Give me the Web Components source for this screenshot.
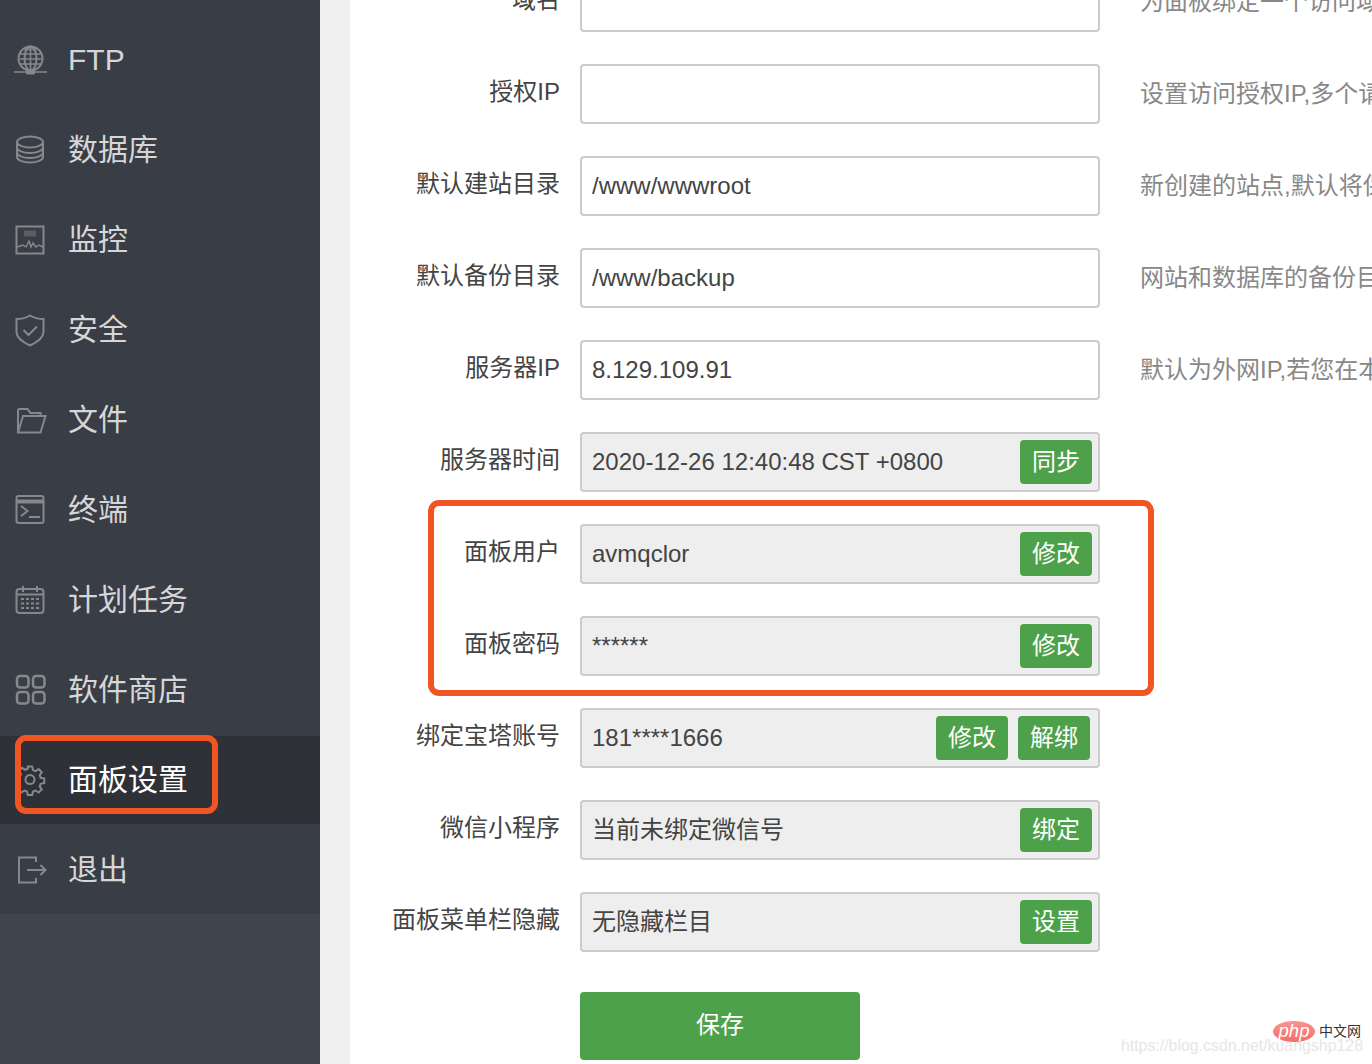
<!DOCTYPE html>
<html lang="zh-CN"><head><meta charset="utf-8"><title>面板设置</title>
<style>
html,body{margin:0;padding:0;height:1064px;overflow:hidden;background:#fff;font-family:"Liberation Sans","Noto Sans CJK SC",sans-serif;}
</style></head><body>
<bt-app>
  <bt-sidebar slot="side">
    <bt-nav icon="ftp" label="FTP"></bt-nav>
    <bt-nav icon="db" label="数据库"></bt-nav>
    <bt-nav icon="mon" label="监控"></bt-nav>
    <bt-nav icon="shield" label="安全"></bt-nav>
    <bt-nav icon="folder" label="文件"></bt-nav>
    <bt-nav icon="term" label="终端"></bt-nav>
    <bt-nav icon="cal" label="计划任务"></bt-nav>
    <bt-nav icon="apps" label="软件商店"></bt-nav>
    <bt-nav icon="gear" label="面板设置" active></bt-nav>
    <bt-nav icon="exit" label="退出"></bt-nav>
  </bt-sidebar>
  <bt-form>
    <bt-row label="域名" note="为面板绑定一个访问域名"></bt-row>
    <bt-row label="授权IP" note="设置访问授权IP,多个请使用逗号隔开"></bt-row>
    <bt-row label="默认建站目录" value="/www/wwwroot" note="新创建的站点,默认将保存到该目录"></bt-row>
    <bt-row label="默认备份目录" value="/www/backup" note="网站和数据库的备份目录"></bt-row>
    <bt-row label="服务器IP" value="8.129.109.91" note="默认为外网IP,若您在本地虚拟机安装"></bt-row>
    <bt-row label="服务器时间" value="2020-12-26 12:40:48 CST +0800" readonly><bt-btn>同步</bt-btn></bt-row>
    <bt-row label="面板用户" value="avmqclor" readonly><bt-btn>修改</bt-btn></bt-row>
    <bt-row label="面板密码" value="******" readonly><bt-btn>修改</bt-btn></bt-row>
    <bt-row label="绑定宝塔账号" value="181****1666" readonly wide><bt-btn>修改</bt-btn><bt-btn>解绑</bt-btn></bt-row>
    <bt-row label="微信小程序" value="当前未绑定微信号" readonly><bt-btn>绑定</bt-btn></bt-row>
    <bt-row label="面板菜单栏隐藏" value="无隐藏栏目" readonly><bt-btn>设置</bt-btn></bt-row>
    <bt-save>保存</bt-save>
  </bt-form>
  <bt-mark style="left:15px;top:735px;width:203px;height:79px"></bt-mark>
  <bt-mark style="left:428px;top:500px;width:726px;height:196px"></bt-mark>
  <bt-watermark></bt-watermark>
</bt-app>
<script>
const ICONS={
ftp:'<circle cx="15.500" cy="14.500" r="12"/><ellipse cx="15.500" cy="14.500" rx="6" ry="12"/><path d="M4.500 10h22M4.500 15h22M4.500 20h22M15.500 2.500v24M-1 28h33" stroke-width="1.600"/><rect x="11" y="25.500" width="9" height="5" rx="1.500" fill="currentColor" stroke="none"/><path d="M9 5h13" stroke-width="3.500" opacity=".6"/>',
db:'<ellipse cx="15" cy="8" rx="13" ry="5.500"/><path d="M2 8v15c0 3 5.800 5.500 13 5.500s13-2.500 13-5.500V8M2 13.500c0 3 5.800 5.500 13 5.500s13-2.500 13-5.500M2 18.500c0 3 5.800 5.500 13 5.500s13-2.500 13-5.500"/>',
mon:'<rect x="1.500" y="2.500" width="27" height="27"/><rect x="9" y="6.500" width="12" height="6" fill="currentColor" stroke="none" opacity=".45"/><path d="M2 23l6-2 3 2 3-6 2 6 2-4 3 4 3-2 4 2" stroke-width="1.500"/>',
shield:'<path d="M15 1.500c4 2.500 8 3.500 13.500 3.500v13c0 6-6 10-13.500 13.500C7.500 28 1.500 24 1.500 18V5C7 5 11 4 15 1.500z"/><path d="M8.500 16l5 5 8.500-8.500"/>',
folder:'<path d="M3 28V6.500A1.500 1.500 0 0 1 4.500 5h8l3 4h10v3"/><path d="M3 28.500h22.500L30.500 12H8L3 28.500z"/>',
term:'<rect x="1.500" y="2" width="27" height="27" rx="2"/><path d="M2 7.500h26" stroke-width="4"/><path d="M6 12l6.500 5L6 22M14 23h11"/>',
cal:'<rect x="1.500" y="5" width="27" height="24" rx="3"/><path d="M8 2v6M22 2v6M2 10.500h26"/><path d="M6 15h18M6 19.500h18M6 24h18" stroke-dasharray="3 2" stroke-width="1.800"/>',
apps:'<rect x="2" y="2" width="11.500" height="11.500" rx="3" stroke-width="2.500"/><rect x="18" y="2" width="11.500" height="11.500" rx="3" stroke-width="2.500"/><rect x="2" y="18" width="11.500" height="11.500" rx="3" stroke-width="2.500"/><rect x="18" y="18" width="11.500" height="11.500" rx="3" stroke-width="2.500"/>',
gear:'<circle cx="15" cy="15.500" r="4.500"/><path d="M12.800 2.500h4.400l.8 3.600 2.500 1 3.100-2 3.100 3.100-2 3.100 1 2.500 3.600.8v4.400l-3.600.8-1 2.500 2 3.100-3.100 3.100-3.100-2-2.500 1-.8 3.600h-4.400l-.8-3.600-2.500-1-3.100 2-3.100-3.100 2-3.100-1-2.500L1.400 17.700v-4.400L5 12.500l1-2.500-2-3.100 3.100-3.100 3.100 2 2.500-1z"/>',
exit:'<path d="M21 8V3.500H4v25h17V24"/><path d="M12 16h18M25.500 11l5 5-5 5"/>'
};
const def=(n,html)=>{customElements.define(n,class extends HTMLElement{
  connectedCallback(){ if(this.shadowRoot) return; const s=this.attachShadow({mode:'open'}); s.innerHTML=typeof html==='function'?html(this):html; }
});};
def('bt-app',`<style>
:host{display:grid;grid-template-columns:320px 30px 1fr;height:1064px;position:relative;overflow:hidden}
.gut{background:#f0f0f0}
</style><slot name="side"></slot><div class="gut"></div><slot></slot>`);
def('bt-sidebar',`<style>
:host{display:block;height:1064px;box-sizing:border-box;background:#3e454d}
.top{padding-top:14px;background:#393d45;}
</style><div class="top"><slot></slot></div>`);
def('bt-nav',h=>`<style>
:host{display:flex;align-items:center;height:90px;box-sizing:border-box;padding-left:15px;color:#d5d6d8;font-size:30px}
:host([active]){color:#fff;background:#2e3138;background-clip:padding-box;border-top:2px solid transparent}
svg{width:31px;height:31px;flex:none;fill:none;stroke:#85888c;stroke-width:2;margin-right:22px;color:#85888c;overflow:visible;filter:blur(.35px)}
:host([active]) svg{position:relative;top:-1px}
span{line-height:40px;position:relative;top:1px}
:host([active]) span{top:0}
</style><svg viewBox="0 0 31 31">${ICONS[h.getAttribute('icon')]}</svg><span>${h.getAttribute('label')}</span>`);
def('bt-form',`<style>
:host{display:block;margin-top:-28px;color:#555}
</style><slot></slot>`);
def('bt-row',h=>{const note=h.getAttribute('note');const v=h.getAttribute('value')||'';const ro=h.hasAttribute('readonly');
return `<style>
:host{display:grid;grid-template-columns:210px 520px 1fr;column-gap:20px;height:60px;margin-bottom:32px;align-items:center;overflow:hidden}
:host([wide]) .btns{right:8px}
.l{text-align:right;font-size:24px;line-height:32px;color:#444;position:relative;top:-2px;white-space:nowrap}
.box{position:relative;box-sizing:border-box;height:60px;border:2px solid #ccc;border-radius:4px;background:${ro?'#eee':'#fff'};padding:0 10px;font-size:24px;line-height:56px;color:#444;white-space:nowrap}
.btns{position:absolute;right:6px;top:6px;display:flex;gap:10px}
.n{font-size:24px;color:#888;white-space:nowrap;line-height:32px;margin-left:20px;overflow:hidden}
</style><div class="l">${h.getAttribute('label')}</div><div class="box">${v}<div class="btns"><slot></slot></div></div>${note?`<div class="n">${note}</div>`:''}`});
def('bt-btn',`<style>
:host{display:block;width:72px;height:44px;background:#4ea14b;border-radius:4px;color:#fff;font-size:24px;line-height:44px;text-align:center}
</style><slot></slot>`);
def('bt-save',`<style>
:host{display:block;width:280px;height:68px;margin:40px 0 0 230px;background:#4ea14b;border-radius:4px;color:#fff;font-size:24px;line-height:66px;text-align:center}
</style><slot></slot>`);
def('bt-mark',`<style>
:host{position:absolute;box-sizing:border-box;border:6px solid #f15523;border-radius:11px;pointer-events:none}
</style>`);
def('bt-watermark',`<style>
:host{position:absolute;right:0;bottom:0;width:260px;height:46px}
.logo{position:absolute;left:161px;top:3px;width:42px;height:21px;border-radius:50%;background:linear-gradient(#f9958f,#f66c6c);color:#fff;font-size:18.500px;font-style:italic;line-height:19px;text-align:center}
.cn{position:absolute;left:207px;top:3px;font-size:14px;line-height:20px;color:#333}
.url{position:absolute;right:9px;top:19px;font-size:15.900px;line-height:18px;color:#e6e6e6;white-space:nowrap}
</style><div class="url">https://blog.csdn.net/kuangshp128</div><div class="logo">php</div><div class="cn">中文网</div>`);
</script>
</body></html>
